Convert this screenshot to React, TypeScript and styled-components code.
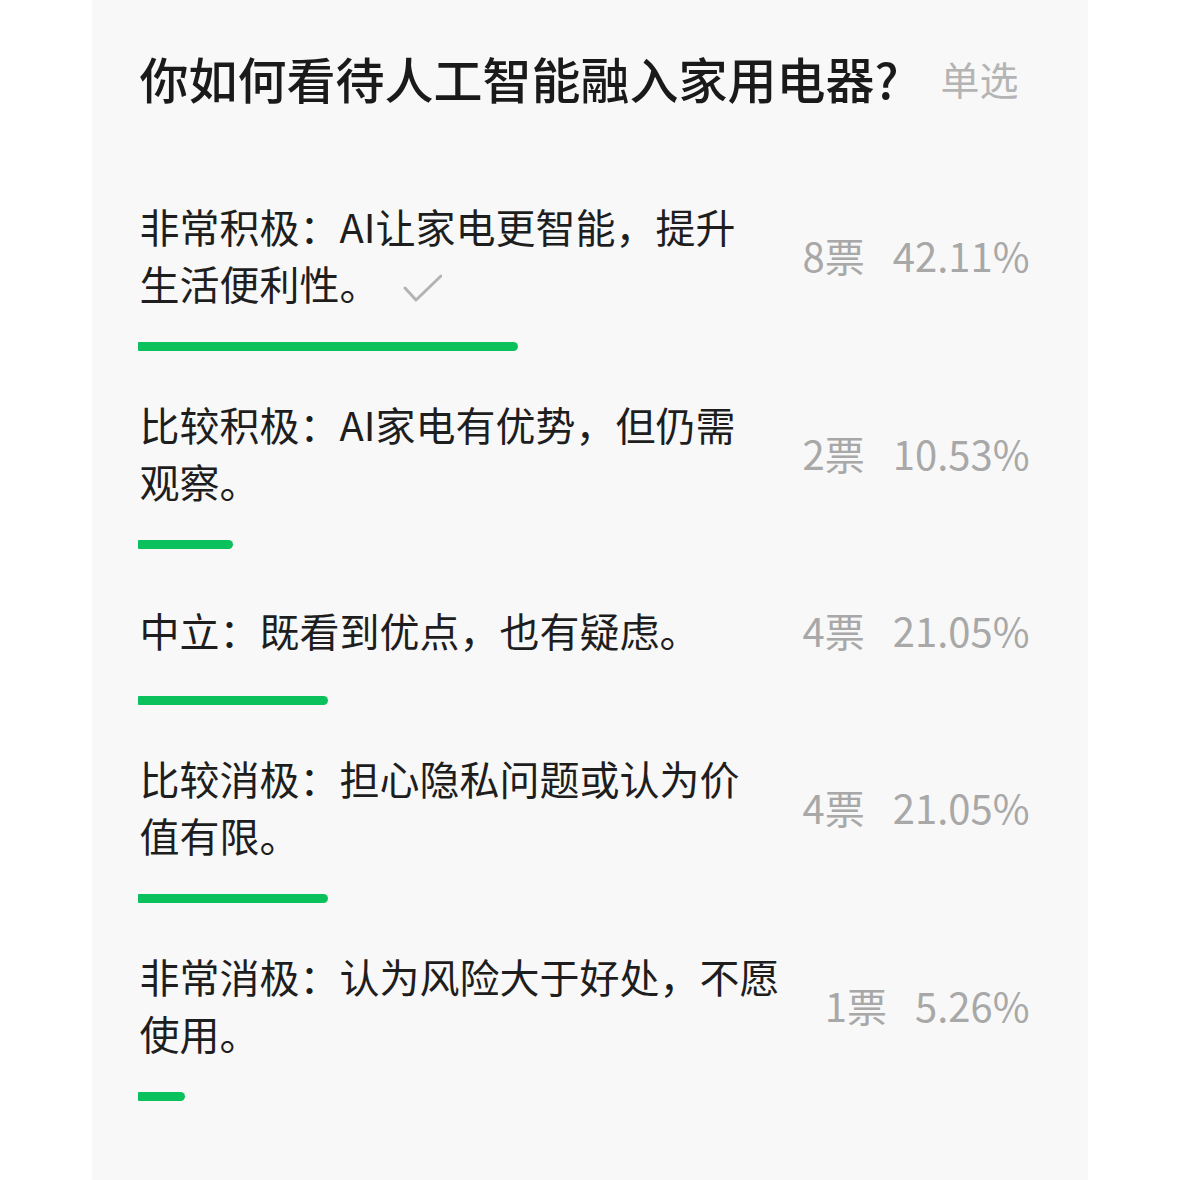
import styled, { createGlobalStyle } from 'styled-components';

const GlobalStyle = createGlobalStyle`
  body {
    margin: 0;
    background: #ffffff;
    font-family: 'Noto Sans CJK SC', 'Noto Sans', sans-serif;
  }
`;

type Option = {
  label: string;
  votes: number;
  percent: string;
  ratio: number;
  chosen?: boolean;
};

const options: Option[] = [
  {
    label: '非常积极：AI让家电更智能，提升生活便利性。',
    votes: 8,
    percent: '42.11%',
    ratio: 0.4211,
    chosen: true,
  },
  {
    label: '比较积极：AI家电有优势，但仍需观察。',
    votes: 2,
    percent: '10.53%',
    ratio: 0.1053,
  },
  {
    label: '中立：既看到优点，也有疑虑。',
    votes: 4,
    percent: '21.05%',
    ratio: 0.2105,
  },
  {
    label: '比较消极：担心隐私问题或认为价值有限。',
    votes: 4,
    percent: '21.05%',
    ratio: 0.2105,
  },
  {
    label: '非常消极：认为风险大于好处，不愿使用。',
    votes: 1,
    percent: '5.26%',
    ratio: 0.0526,
  },
];

const Card = styled.div`
  width: 996px;
  min-height: 1180px;
  margin: 0 auto;
  box-sizing: border-box;
  padding: 46px 46px 20px;
  background: #f8f8f8;
`;

const Header = styled.div`
  display: flex;
  align-items: center;
  gap: 42px;
  padding-left: 2px;
  margin-bottom: 88px;
`;

const Title = styled.h1`
  margin: 0;
  font-size: 49px;
  line-height: 64px;
  font-weight: 500;
  color: #1a1a1a;
`;

const Tag = styled.span`
  font-size: 39px;
  line-height: 64px;
  color: #b4b4b4;
`;

const OptionBlock = styled.div`
  margin-bottom: 45px;
`;

const Row = styled.div`
  display: flex;
  align-items: center;
  gap: 32px;
  min-height: 72px;
  padding-left: 2px;
`;

const Label = styled.div`
  flex: 1;
  font-size: 40px;
  line-height: 57px;
  color: #1e1e1e;
`;

const Stats = styled.div`
  display: flex;
  gap: 28px;
  padding-right: 12px;
  font-size: 40px;
  line-height: 57px;
  color: #a8a8a8;
  white-space: nowrap;
`;

const Check = styled.svg`
  width: 40px;
  height: 40px;
  margin-left: 22px;
  vertical-align: -8px;
`;

const Bar = styled.div`
  height: 9px;
  margin-top: 30px;
  border-radius: 1px 5px 5px 1px;
  background: #0ac15c;
`;

const App = () => {
  return (
    <>
      <GlobalStyle />
      <Card>
        <Header>
          <Title>你如何看待人工智能融入家用电器?</Title>
          <Tag>单选</Tag>
        </Header>
        {options.map((o) => (
          <OptionBlock key={o.label}>
            <Row>
              <Label>
                {o.label}
                {o.chosen && (
                  <Check viewBox='0 0 40 40'>
                    <polyline
                      points='3,20 14,32 39,8'
                      fill='none'
                      stroke='#b3b3b3'
                      strokeWidth='3'
                      strokeLinecap='round'
                      strokeLinejoin='round'
                    />
                  </Check>
                )}
              </Label>
              <Stats>
                <span>{o.votes}票</span>
                <span>{o.percent}</span>
              </Stats>
            </Row>
            <Bar style={{ width: `${o.ratio * 100}%` }} />
          </OptionBlock>
        ))}
      </Card>
    </>
  );
};

export default App;
